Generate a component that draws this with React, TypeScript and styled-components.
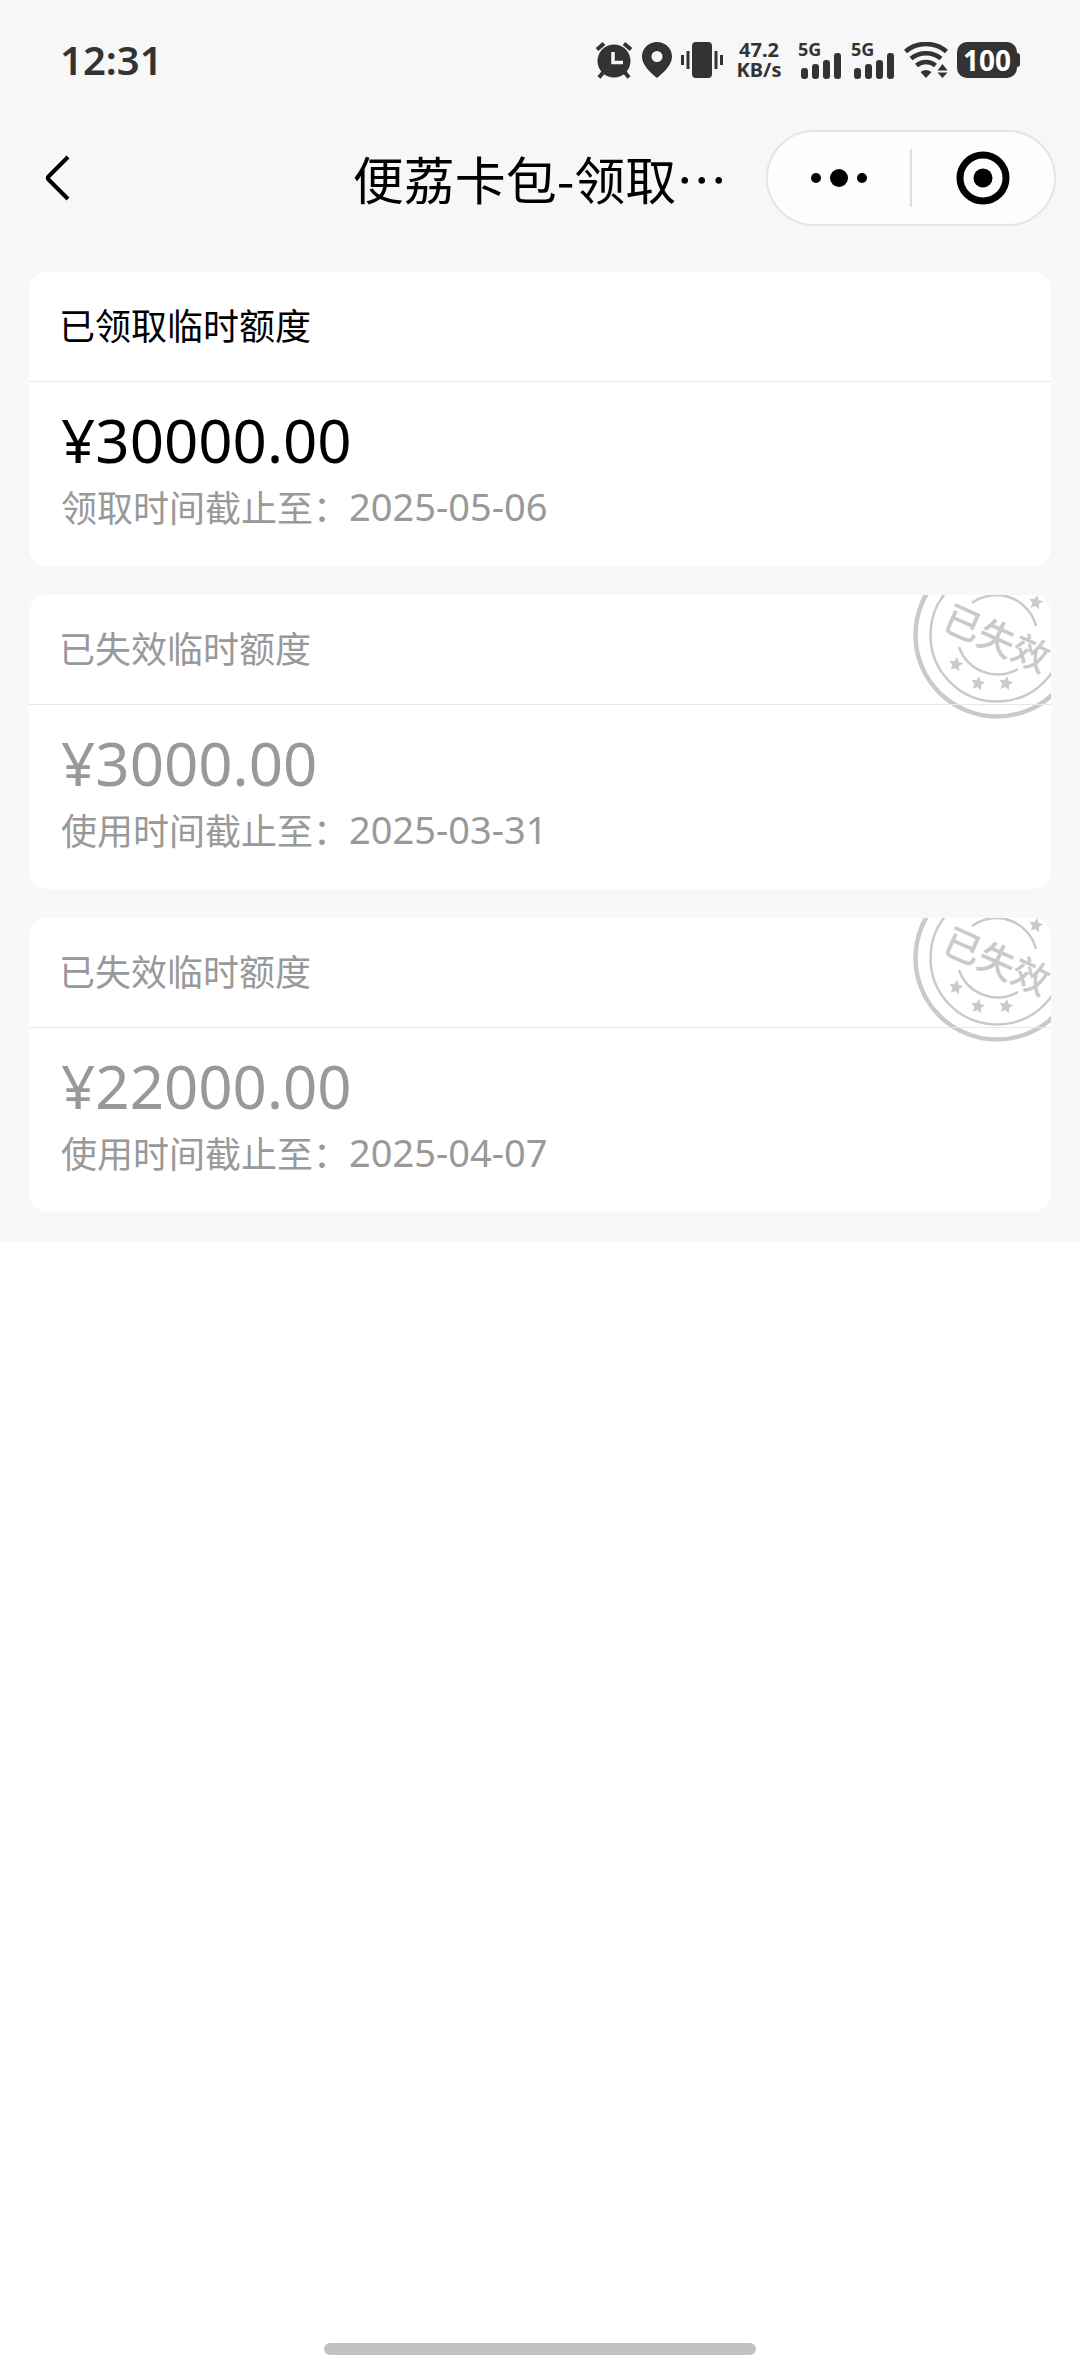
import React from 'react';
import styled, { createGlobalStyle } from 'styled-components';

const latin = '"Noto Sans", "Noto Sans CJK SC", sans-serif';
const cjk = '"Noto Sans CJK SC", sans-serif';

const GlobalStyle = createGlobalStyle`
  *, *::before, *::after { box-sizing: border-box; }
  body { margin: 0; background: #fff; font-family: ${cjk}; color: #000; }
  h1, h2, p { margin: 0; font-weight: 400; }
  button { margin: 0; padding: 0; border: 0; background: none; color: inherit; font: inherit; cursor: pointer; }
  svg { display: block; flex: none; }
`;

const Page = styled.div`
  min-height: 100vh;
  display: flex;
  flex-direction: column;
`;

const TopArea = styled.header`
  background: #f7f7f7;
`;

const StatusBar = styled.div`
  height: 120px;
  padding: 0 60px;
  display: flex;
  align-items: center;
  justify-content: space-between;
  color: #333;
  font-family: ${latin};
`;

const Clock = styled.span`
  font-size: 40px;
  line-height: 48px;
  font-weight: 600;
`;

const StatusIcons = styled.div`
  display: flex;
  align-items: center;
  gap: 9px;
`;

const Speed = styled.div`
  width: 48px;
  margin: 0 6px 0 3px;
  display: flex;
  flex-direction: column;
  align-items: center;
  font-weight: 700;
  font-size: 20px;
  line-height: 20px;
`;

const Signal = styled.div`
  width: 44px;
  height: 38px;
  position: relative;
  display: flex;
  align-items: flex-end;
`;

const SignalLabel = styled.span`
  position: absolute;
  left: 0;
  top: 0;
  font-size: 18px;
  line-height: 16px;
  font-weight: 700;
`;

const Battery = styled.div`
  display: flex;
  align-items: center;
`;

const BatteryBody = styled.span`
  width: 60px;
  height: 36px;
  border-radius: 10px;
  background: #333;
  color: #fff;
  display: flex;
  align-items: center;
  justify-content: center;
  font-size: 28px;
  line-height: 36px;
  font-weight: 700;
`;

const BatteryTip = styled.span`
  width: 3px;
  height: 14px;
  border-radius: 0 3px 3px 0;
  background: #333;
`;

const NavBar = styled.nav`
  height: 121px;
  padding: 0 24px 5px;
  display: grid;
  grid-template-columns: 1fr auto 1fr;
  align-items: center;
`;

const BackButton = styled.button`
  width: 66px;
  height: 72px;
  display: flex;
  align-items: center;
  justify-content: center;
`;

const NavTitle = styled.h1`
  font-size: 51px;
  line-height: 72px;
`;

const Capsule = styled.div`
  justify-self: end;
  width: 290px;
  height: 96px;
  border: 2px solid #e5e5e5;
  border-radius: 48px;
  background: #fdfdfd;
  display: flex;
  align-items: center;
`;

const CapsuleButton = styled.button`
  flex: 1;
  height: 100%;
  display: flex;
  align-items: center;
  justify-content: center;
`;

const CapsuleDivider = styled.span`
  width: 2px;
  height: 58px;
  background: #dedede;
`;

const QuotaList = styled.main`
  background: #f7f8fa;
  padding: 31px 29px 29px;
  display: flex;
  flex-direction: column;
  gap: 29px;
`;

const Card = styled.article<{ $expired: boolean }>`
  position: relative;
  isolation: isolate;
  overflow: hidden;
  border-radius: 18px;
  background: #fff;
  color: ${(p) => (p.$expired ? '#999' : '#000')};
`;

const CardTitle = styled.h2`
  padding: 25px 30px 30px;
  border-bottom: 1px solid #e8e8e8;
  font-size: 36px;
  line-height: 54px;
`;

const CardBody = styled.div`
  padding: 20px 32px 32px;
`;

const Amount = styled.p`
  font-family: ${latin};
  font-size: 60px;
  line-height: 76px;
`;

const Deadline = styled.p`
  display: flex;
  align-items: center;
  color: #999;
  font-size: 36px;
  line-height: 56px;
`;

const DateText = styled.time`
  font-family: ${latin};
  font-size: 38px;
`;

const Stamp = styled.svg`
  position: absolute;
  z-index: -1;
  top: -44px;
  right: -30px;
`;

const StampText = styled.text`
  font-family: ${cjk};
  font-size: 37px;
  font-weight: 500;
`;

const HomeArea = styled.footer`
  margin-top: auto;
  padding: 21px 0;
  display: flex;
  justify-content: center;
`;

const HomeIndicator = styled.div`
  width: 40%;
  height: 12px;
  border-radius: 6px;
  background: #c2c2c2;
`;

const AlarmIcon = () => (
  <svg width="38" height="38" viewBox="0 0 38 38" fill="none" stroke="#333" strokeWidth="4">
    <circle cx="19" cy="20" r="16.5" fill="#333" stroke="none" />
    <path d="M2 8.500 9 2.500M36 8.500 29 2.500M8.500 31 4 36.500M29.500 31 34 36.500" />
    <path d="M18 11v10.500h10" stroke="#f7f7f7" strokeWidth="3.500" />
  </svg>
);

const PinIcon = () => (
  <svg width="30" height="36" viewBox="0 0 30 36">
    <path
      fill="#333"
      fillRule="evenodd"
      d="M15 0C6.500 0 0 6.500 0 14.500 0 22.500 7 29.500 15 36c8-6.500 15-13.500 15-21.500C30 6.500 23.500 0 15 0Zm0 9a5.500 5.500 0 1 1 0 11 5.500 5.500 0 0 1 0-11Z"
    />
  </svg>
);

const VibrateIcon = () => (
  <svg width="42" height="36" viewBox="0 0 42 36" fill="#333">
    <rect x="11" y="0" width="20" height="36" rx="4" />
    <rect x="5.500" y="9" width="3" height="18" />
    <rect x="33.500" y="9" width="3" height="18" />
    <rect x="0" y="13" width="3" height="10" />
    <rect x="39" y="13" width="3" height="10" />
  </svg>
);

const SignalStrength = () => (
  <Signal>
    <SignalLabel>5G</SignalLabel>
    <svg width="44" height="26" viewBox="0 0 44 26" fill="#333">
      <rect x="3" y="15" width="7" height="11" rx="3" />
      <rect x="14" y="11" width="7" height="15" rx="3" />
      <rect x="25" y="7" width="7" height="19" rx="3" />
      <rect x="36" y="0" width="7" height="26" rx="3" />
    </svg>
  </Signal>
);

const WifiIcon = () => (
  <svg width="44" height="36" viewBox="0 0 44 36" fill="none" stroke="#333" strokeWidth="4.500">
    <path d="M1.500 9.500C13-.6 31-.6 42.500 9.500" />
    <path d="M7 16.500C15.500 9.400 28.500 9.400 37 16.500" />
    <path d="M12.500 23.500c5.500-4.600 13.500-4.600 19 0" />
    <path d="M16.500 30q5.500-4 11 0L22 36Z" fill="#333" stroke="none" />
    <path d="M33.500 28.500 38.500 22l5 6.500ZM33.500 30.500h10l-5 5.500Z" fill="#333" stroke="none" />
  </svg>
);

const star = 'M0-7 2.100-2.500 7-2 3.300 1.500 4.300 6.500 0 4-4.300 6.500-3.300 1.500-7-2-2.100-2.500Z';
const stars = [
  [-41, 29],
  [-19, 48],
  [9, 48],
  [39, -33],
];

const ExpiredStamp = () => (
  <Stamp width="168" height="168" viewBox="-84 -84 168 168" fill="none" stroke="#cacaca">
    <circle r="81.500" strokeWidth="4.500" />
    <circle r="66.500" strokeWidth="2.500" />
    <path d="M-25-32A41 41 0 0 1 39-9M-38 12A41 41 0 0 0 21 34" strokeWidth="2.500" />
    <g fill="#cacaca" stroke="none">
      {stars.map(([x, y]) => (
        <path key={`${x},${y}`} d={star} transform={`translate(${x} ${y}) rotate(10)`} />
      ))}
      <StampText textAnchor="middle" y="14" transform="translate(0 3) rotate(24)">
        已失效
      </StampText>
    </g>
  </Stamp>
);

const quotas = [
  { title: '已领取临时额度', amount: '30000.00', label: '领取时间截止至：', date: '2025-05-06', expired: false },
  { title: '已失效临时额度', amount: '3000.00', label: '使用时间截止至：', date: '2025-03-31', expired: true },
  { title: '已失效临时额度', amount: '22000.00', label: '使用时间截止至：', date: '2025-04-07', expired: true },
];

export default function App() {
  return (
    <Page lang="zh-CN">
      <GlobalStyle />
      <TopArea>
        <StatusBar>
          <Clock>12:31</Clock>
          <StatusIcons>
            <AlarmIcon />
            <PinIcon />
            <VibrateIcon />
            <Speed>
              <span>47.2</span>
              <span>KB/s</span>
            </Speed>
            <SignalStrength />
            <SignalStrength />
            <WifiIcon />
            <Battery>
              <BatteryBody>100</BatteryBody>
              <BatteryTip />
            </Battery>
          </StatusIcons>
        </StatusBar>
        <NavBar>
          <BackButton type="button" aria-label="返回">
            <svg width="26" height="46" viewBox="0 0 26 46" fill="none" stroke="#000" strokeWidth="4">
              <path d="M24 2 4.500 21.500q-1.500 1.500 0 3L24 44" />
            </svg>
          </BackButton>
          <NavTitle>便荔卡包-领取…</NavTitle>
          <Capsule>
            <CapsuleButton type="button" aria-label="更多">
              <svg width="56" height="18" viewBox="0 0 56 18">
                <circle cx="5" cy="9" r="5" />
                <circle cx="28" cy="9" r="9" />
                <circle cx="51" cy="9" r="5" />
              </svg>
            </CapsuleButton>
            <CapsuleDivider />
            <CapsuleButton type="button" aria-label="关闭">
              <svg width="54" height="54" viewBox="0 0 54 54">
                <circle cx="27" cy="27" r="23" fill="none" stroke="#000" strokeWidth="7" />
                <circle cx="27" cy="27" r="9.500" />
              </svg>
            </CapsuleButton>
          </Capsule>
        </NavBar>
      </TopArea>
      <QuotaList>
        {quotas.map((q) => (
          <Card key={q.date} $expired={q.expired}>
            {q.expired && <ExpiredStamp />}
            <CardTitle>{q.title}</CardTitle>
            <CardBody>
              <Amount>¥{q.amount}</Amount>
              <Deadline>
                {q.label}
                <DateText dateTime={q.date}>{q.date}</DateText>
              </Deadline>
            </CardBody>
          </Card>
        ))}
      </QuotaList>
      <HomeArea>
        <HomeIndicator />
      </HomeArea>
    </Page>
  );
}
